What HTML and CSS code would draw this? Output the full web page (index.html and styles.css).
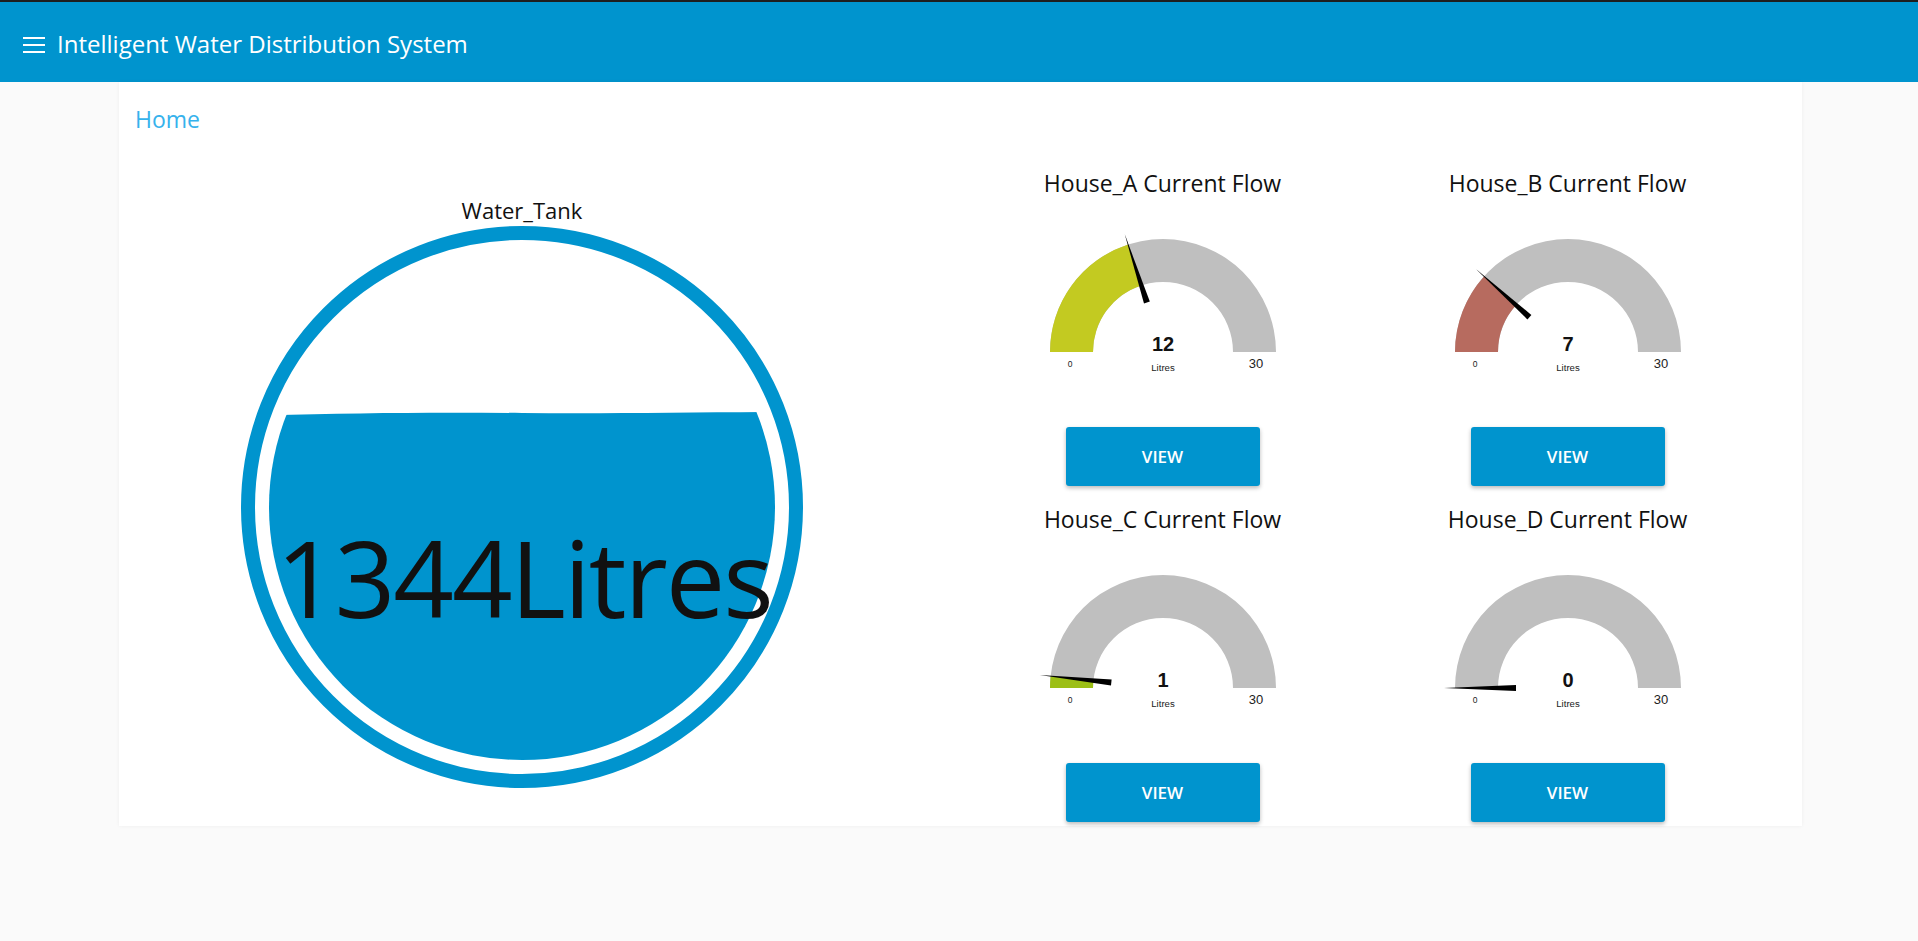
FILE: index.html
```html
<!DOCTYPE html>
<html lang="en">
<head>
<meta charset="utf-8">
<title>Intelligent Water Distribution System</title>
<link rel="stylesheet" href="styles.css">
</head>
<body>
<header class="topbar">
  <svg class="menu-icon" width="22" height="16" viewBox="0 0 22 16">
    <rect x="0" y="0" width="22" height="2"/>
    <rect x="0" y="7" width="22" height="2"/>
    <rect x="0" y="14" width="22" height="2"/>
  </svg>
  <span class="app-title">Intelligent Water Distribution System</span>
</header>
<main class="content">
  <section class="card">
    <h2 class="card-title">Home</h2>
    <div class="card-body">
      <div class="tank-widget">
        <div class="tank-title">Water_Tank</div>
        <svg class="tank-svg" width="562" height="562" viewBox="0 0 562 562">
          <defs><clipPath id="tankClip"><circle cx="281" cy="281" r="253"/></clipPath></defs>
          <circle class="tank-ring" cx="281" cy="281" r="274"/>
          <path class="tank-water" clip-path="url(#tankClip)" d="M0 190 C 90 187 190 186 281 187 C 370 188 470 186 562 186 L562 562 L0 562 Z"/>
          <text class="tank-value" x="283" y="392">1344Litres</text>
        </svg>
      </div>
      <div class="gauge-grid">
        <div class="gauge-widget">
          <div class="gauge-title">House_A Current Flow</div>
          <svg class="gauge" width="260" height="150" viewBox="0 0 260 150">
            <path class="g-bg" d="M17 125 A113 113 0 0 1 243 125 L200 125 A70 70 0 0 0 60 125 Z"/>
            <path fill="#c3ca21" d="M17 125 A113 113 0 0 1 95.1 17.5 L108.4 58.4 A70 70 0 0 0 60 125 Z"/>
            <polygon class="g-needle" points="91.7,7.1 116.8,74.6 111.0,76.4"/>
            <text class="g-value" x="130" y="124">12</text>
            <text class="g-unit" x="130" y="144">Litres</text>
            <text class="g-min" x="37" y="140">0</text>
            <text class="g-max" x="223" y="141">30</text>
          </svg>
          <button class="view-btn">VIEW</button>
        </div>
        <div class="gauge-widget">
          <div class="gauge-title">House_B Current Flow</div>
          <svg class="gauge" width="260" height="150" viewBox="0 0 260 150">
            <path class="g-bg" d="M17 125 A113 113 0 0 1 243 125 L200 125 A70 70 0 0 0 60 125 Z"/>
            <path fill="#b76b5f" d="M17 125 A113 113 0 0 1 46.0 49.4 L78.0 78.2 A70 70 0 0 0 60 125 Z"/>
            <polygon class="g-needle" points="37.9,42.0 93.4,88.0 89.4,92.4"/>
            <text class="g-value" x="130" y="124">7</text>
            <text class="g-unit" x="130" y="144">Litres</text>
            <text class="g-min" x="37" y="140">0</text>
            <text class="g-max" x="223" y="141">30</text>
          </svg>
          <button class="view-btn">VIEW</button>
        </div>
        <div class="gauge-widget">
          <div class="gauge-title">House_C Current Flow</div>
          <svg class="gauge" width="260" height="150" viewBox="0 0 260 150">
            <path class="g-bg" d="M17 125 A113 113 0 0 1 243 125 L200 125 A70 70 0 0 0 60 125 Z"/>
            <path fill="#9cbf16" d="M17 125 A113 113 0 0 1 17.6 113.2 L60.4 117.7 A70 70 0 0 0 60 125 Z"/>
            <polygon class="g-needle" points="6.7,112.0 78.6,116.6 78.0,122.6"/>
            <text class="g-value" x="130" y="124">1</text>
            <text class="g-unit" x="130" y="144">Litres</text>
            <text class="g-min" x="37" y="140">0</text>
            <text class="g-max" x="223" y="141">30</text>
          </svg>
          <button class="view-btn">VIEW</button>
        </div>
        <div class="gauge-widget">
          <div class="gauge-title">House_D Current Flow</div>
          <svg class="gauge" width="260" height="150" viewBox="0 0 260 150">
            <path class="g-bg" d="M17 125 A113 113 0 0 1 243 125 L200 125 A70 70 0 0 0 60 125 Z"/>
            <polygon class="g-needle" points="6,125 78,122 78,128"/>
            <text class="g-value" x="130" y="124">0</text>
            <text class="g-unit" x="130" y="144">Litres</text>
            <text class="g-min" x="37" y="140">0</text>
            <text class="g-max" x="223" y="141">30</text>
          </svg>
          <button class="view-btn">VIEW</button>
        </div>
      </div>
    </div>
  </section>
</main>
</body>
</html>
```

FILE: styles.css
```css
html, body {
  margin: 0;
  padding: 0;
}

body {
  background: #fafafa;
  font-family: "Open Sans", "Noto Sans", sans-serif;
  color: #111;
  min-height: 941px;
}

.topbar {
  height: 80px;
  border-top: 2px solid #1e1e1e;
  background: #0094ce;
  display: flex;
  align-items: center;
  padding-left: 23px;
  color: #fff;
}

.menu-icon {
  display: block;
  fill: #fff;
  margin-top: 6px;
  margin-right: 12px;
}

.app-title {
  font-size: 24px;
  line-height: 32px;
  margin-top: 3px;
}

.content {
  padding-left: 119px;
}

.card {
  width: 1683px;
  box-sizing: border-box;
  background: #fff;
  padding: 22px 0 4px;
  box-shadow: 0 0 4px rgba(0, 0, 0, 0.05);
}

.card-title {
  margin: 0;
  padding-left: 16px;
  font-size: 23px;
  line-height: 30px;
  font-weight: 400;
  color: #36b2ec;
}

.card-body {
  display: flex;
  align-items: flex-start;
}

.tank-widget {
  width: 806px;
  margin-top: 62px;
  display: flex;
  flex-direction: column;
  align-items: center;
}

.tank-title {
  font-size: 22px;
  line-height: 28px;
  font-weight: 500;
}

.tank-svg {
  display: block;
  margin-top: 2px;
}

.tank-ring {
  fill: none;
  stroke: #0094ce;
  stroke-width: 14;
}

.tank-water {
  fill: #0094ce;
}

.tank-value {
  font-family: "Open Sans", "Noto Sans", sans-serif;
  font-size: 106px;
  letter-spacing: -2px;
  text-anchor: middle;
  fill: #111;
}

.gauge-grid {
  margin-left: 35px;
  margin-top: 34px;
  display: grid;
  grid-template-columns: 405px 405px;
  row-gap: 18px;
}

.gauge-widget {
  display: flex;
  flex-direction: column;
  align-items: center;
}

.gauge-title {
  font-size: 23px;
  line-height: 30px;
  font-weight: 500;
}

.gauge {
  display: block;
  margin-top: 29px;
}

.g-bg {
  fill: #bfbfbf;
}

.g-needle {
  fill: #000;
}

.g-value {
  font-family: "Liberation Sans", Arial, sans-serif;
  font-weight: 700;
  font-size: 20px;
  text-anchor: middle;
  fill: #111;
}

.g-unit {
  font-family: "Liberation Sans", Arial, sans-serif;
  font-size: 9.6px;
  text-anchor: middle;
  fill: #222;
}

.g-min {
  font-family: "Liberation Sans", Arial, sans-serif;
  font-size: 8.5px;
  text-anchor: middle;
  fill: #222;
}

.g-max {
  font-family: "Liberation Sans", Arial, sans-serif;
  font-size: 13px;
  text-anchor: middle;
  fill: #222;
}

.view-btn {
  margin-top: 50px;
  width: 194px;
  height: 59px;
  border: 0;
  border-radius: 3px;
  background: #0094ce;
  color: #fff;
  font-family: "Open Sans", "Noto Sans", sans-serif;
  font-weight: 600;
  font-size: 17px;
  box-shadow: 0 2px 4px rgba(0, 0, 0, 0.28);
  cursor: pointer;
  padding: 0;
}
```
